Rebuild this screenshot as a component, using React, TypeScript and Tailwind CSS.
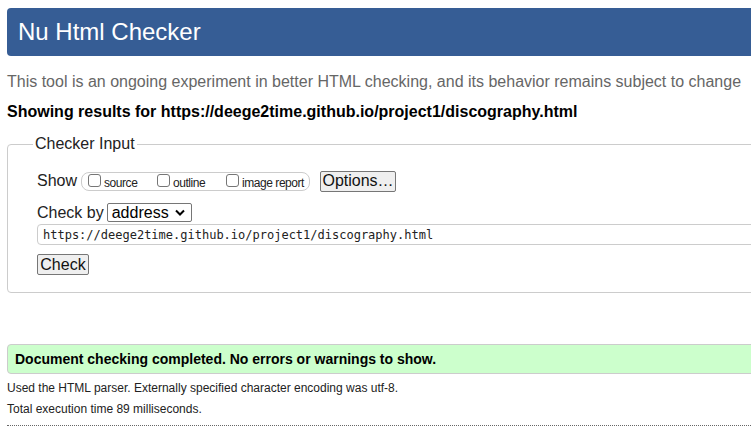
import React from "react";

function Box({ label, w }: { label: string; w: string }) {
  return (
    <span className={`flex items-center ${w}`}>
      <input
        type="checkbox"
        className="appearance-none m-0 w-[13px] h-[13px] border border-[#767676] rounded-[3px] bg-white shrink-0 -translate-y-[1px]"
      />
      <span className="ml-[3px] mt-[3px] text-[12px] tracking-[-0.45px] text-[#222]">{label}</span>
    </span>
  );
}

export default function App() {
  return (
    <div
      className="w-[751px] h-[433px] overflow-hidden bg-white text-black"
      style={{ fontFamily: '"Liberation Sans", Arial, sans-serif' }}
    >
      <div className="w-[900px] pl-[7px] pt-[8px]">
        <div className="h-[48px] bg-[#365d95] rounded-[4px] flex items-center pl-[11px]">
          <h1 className="text-[24px] leading-none text-white font-normal">Nu Html Checker</h1>
        </div>

        <p className="mt-[17px] text-[16px] leading-[18px] text-[#666]">
          This tool is an ongoing experiment in better HTML checking, and its behavior remains subject to change
        </p>
        <p className="mt-[12px] text-[16px] leading-[18px] font-bold">
          Showing results for https://deege2time.github.io/project1/discography.html
        </p>

        <fieldset className="mt-[14px] border border-[#cccccc] rounded-[4px] pl-[29px] pb-[16px] h-[158px]">
          <legend className="ml-[-4px] px-[2px] text-[16px] leading-[18px] text-[#222]">Checker Input</legend>

          <div className="mt-[17px] flex items-center h-[22px]">
            <span className="text-[16px] text-[#222]">Show</span>
            <div className="ml-[4px] flex items-center w-[229px] h-[19px] border border-[#cccccc] rounded-[8px] pl-[6px]">
              <Box label="source" w="w-[69px]" />
              <Box label="outline" w="w-[69px]" />
              <Box label="image report" w="w-[80px]" />
            </div>
            <button className="ml-[10px] w-[76px] h-[21px] bg-[#efefef] border border-[#767676] rounded-[2px] text-[16px] leading-none text-[#111]">
              Options…
            </button>
          </div>

          <div className="mt-[10px] flex items-center h-[21px]">
            <span className="text-[16px] text-[#222]">Check by</span>
            <div className="ml-[3px] w-[85px] h-[19px] border border-[#767676] rounded-[2px] flex items-center justify-between pl-[4px] pr-[6px]">
              <span className="text-[16px] leading-none text-black">address</span>
              <svg width="10" height="7" viewBox="0 0 10 7">
                <path d="M1 1.5 L5 5.5 L9 1.5" fill="none" stroke="#000" strokeWidth="2" />
              </svg>
            </div>
          </div>

          <div
            className="mt-[1px] h-[21px] border border-[#cccccc] rounded-[4px] flex items-center pl-[5px] text-[12px] text-[#222]"
            style={{ fontFamily: '"DejaVu Sans Mono", monospace' }}
          >
            https://deege2time.github.io/project1/discography.html
          </div>

          <button className="mt-[9px] w-[52px] h-[21px] bg-[#efefef] border border-[#767676] rounded-[2px] text-[16px] leading-none text-[#111]">
            Check
          </button>
        </fieldset>

        <div className="mt-[51px] h-[30px] bg-[#ccffcc] border border-[#cccccc] rounded-[4px] flex items-center pl-[7px]">
          <span className="text-[14px] font-bold text-black">Document checking completed. No errors or warnings to show.</span>
        </div>

        <p className="mt-[7px] text-[12px] leading-[14px] text-[#222]">
          Used the HTML parser. Externally specified character encoding was utf-8.
        </p>
        <p className="mt-[7px] text-[12px] leading-[14px] text-[#222]">Total execution time 89 milliseconds.</p>
        <div className="mt-[9px] w-[744px] border-t border-dotted border-[#666]" />
      </div>
    </div>
  );
}
